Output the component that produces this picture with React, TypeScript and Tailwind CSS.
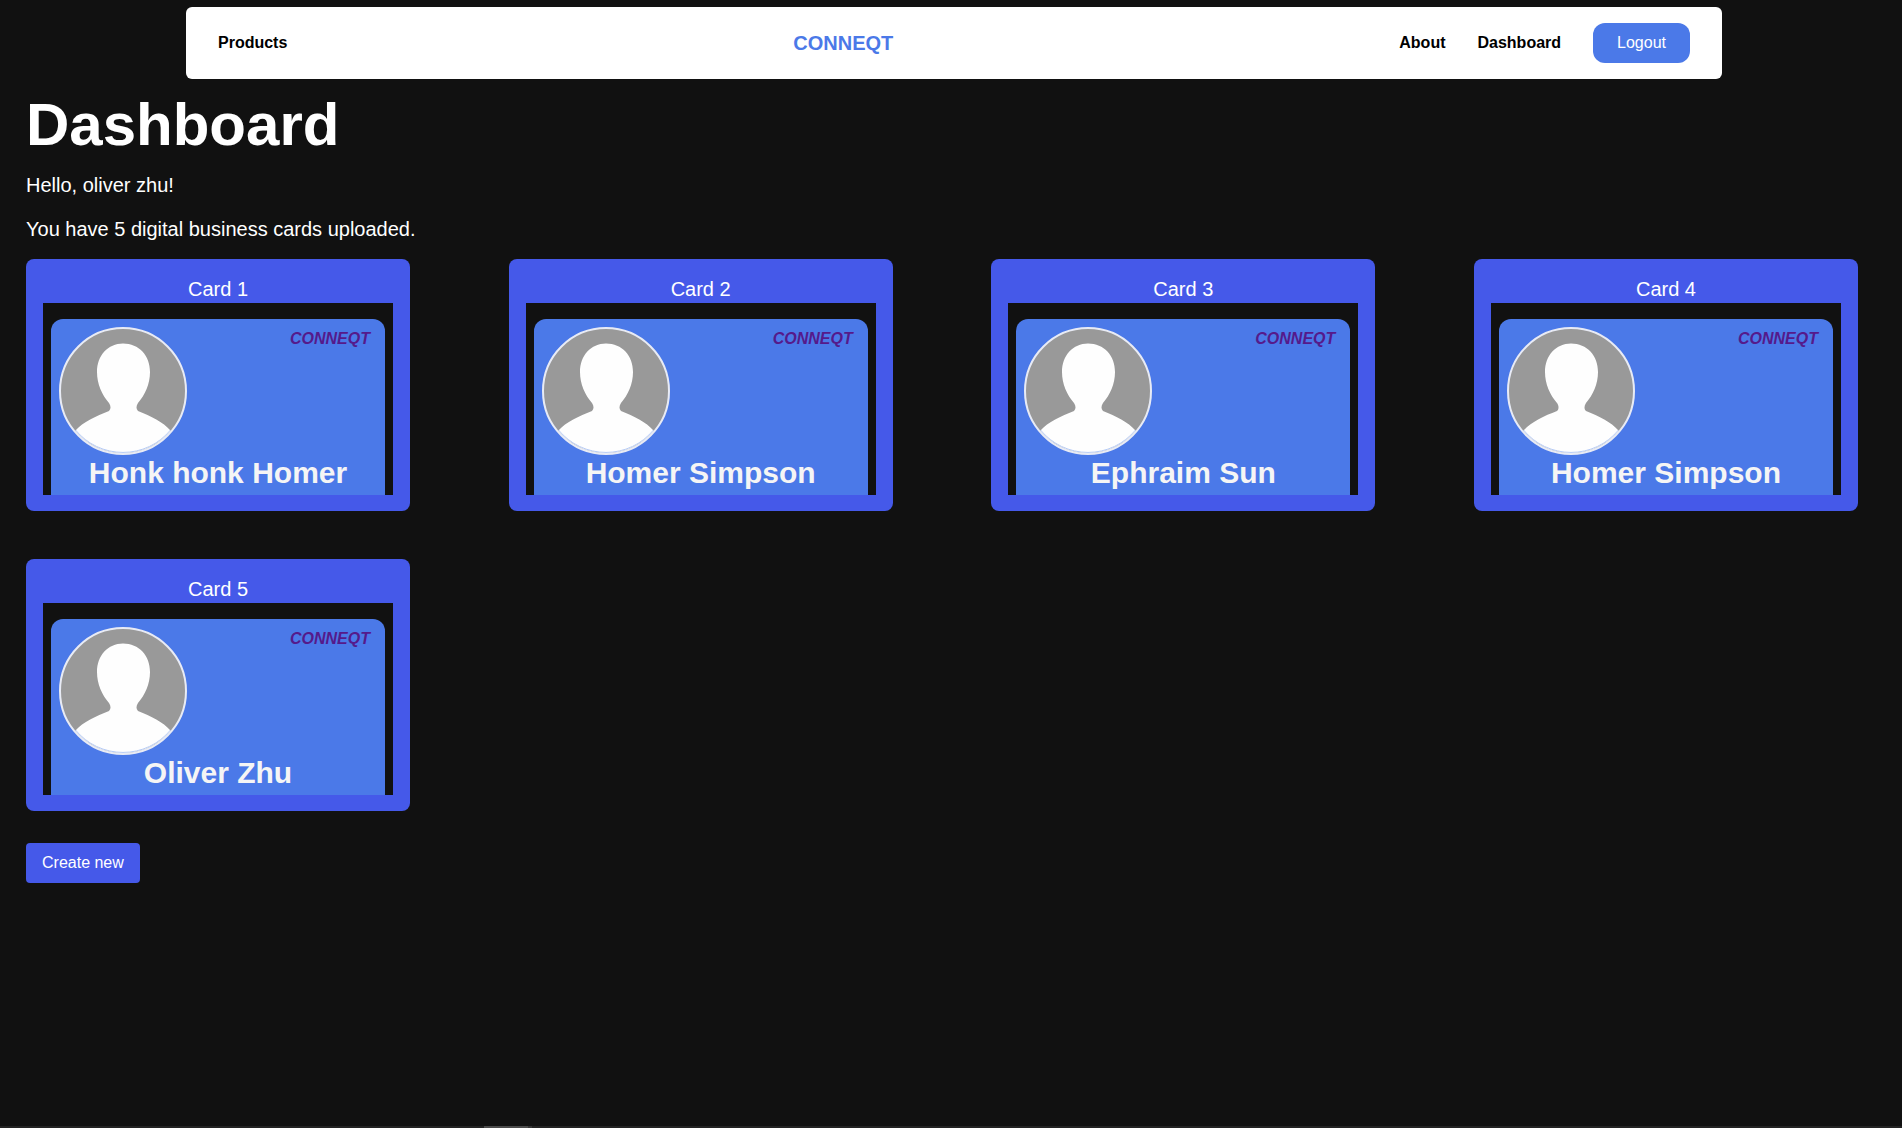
const cards = [
  { title: 'Card 1', name: 'Honk honk Homer' },
  { title: 'Card 2', name: 'Homer Simpson' },
  { title: 'Card 3', name: 'Ephraim Sun' },
  { title: 'Card 4', name: 'Homer Simpson' },
  { title: 'Card 5', name: 'Oliver Zhu' },
];

function Avatar() {
  return (
    <div className="size-32 overflow-hidden rounded-full border-2 border-[#e8ebf5] bg-[#999999]">
      <svg viewBox="0 0 124 124" className="block size-full" role="img" aria-label="Profile picture">
        <path
          fill="#fefefe"
          d="M62 14.500C78 14.500 89 26.500 89 43C89 55 84 66 77 74C75 77 75 80 77 82C90 87 102 93 109.500 101.500L112 124H12L14.500 101.500C22 93 35 87 48 82C50 80 50 77 48 74C41 66 36 55 36 43C36 26.500 47 14.500 62 14.500Z"
        />
        <path fill="none" stroke="#b5cbf7" strokeWidth="1" d="M14.500 101A61.500 61.500 0 0 0 109.500 101" />
      </svg>
    </div>
  );
}

function Card({ title, name }: { title: string; name: string }) {
  return (
    <article className="rounded-lg bg-[#4559e9] px-[17px] py-4">
      <h2 className="text-center text-xl">{title}</h2>
      <div className="h-48 overflow-hidden bg-[#111111] px-2 pt-4">
        <div className="h-60 rounded-xl bg-[#4b79e8] p-2">
          <div className="flex items-start justify-between">
            <Avatar />
            <a href="#" className="pr-[7px] font-bold text-[#551a8b] italic">
              CONNEQT
            </a>
          </div>
          <h3 className="text-center text-3xl font-bold text-[#f5f5f5]">{name}</h3>
        </div>
      </div>
    </article>
  );
}

export default function App() {
  return (
    <div className="flex min-h-screen flex-col bg-[#111111] pt-[7px] font-['Liberation_Sans',Arial,sans-serif] text-white">
      <header className="pr-[180px] pl-[186px]">
        <nav className="flex items-center justify-between rounded-md bg-white px-8 py-4 text-black">
          <a href="#" className="font-bold">
            Products
          </a>
          <a href="#" className="text-xl font-bold text-[#4b79e8]">
            CONNEQT
          </a>
          <div className="flex items-center gap-8">
            <a href="#" className="font-bold">
              About
            </a>
            <a href="#" className="font-bold">
              Dashboard
            </a>
            <button type="button" className="h-10 rounded-xl bg-[#4b79e8] px-6 text-white">
              Logout
            </button>
          </div>
        </nav>
      </header>
      <main className="flex grow flex-col items-start gap-4 pt-4 pr-[44px] pl-[26px]">
        <h1 className="text-6xl font-bold">Dashboard</h1>
        <p className="text-xl">Hello, oliver zhu!</p>
        <p className="text-xl">You have 5 digital business cards uploaded.</p>
        <section className="grid w-full grid-cols-[repeat(auto-fill,384px)] justify-between gap-y-12">
          {cards.map((card) => (
            <Card key={card.title} title={card.title} name={card.name} />
          ))}
        </section>
        <button type="button" className="mt-4 h-10 rounded bg-[#4559e9] px-4">
          Create new
        </button>
      </main>
      <footer className="flex h-0.5 bg-[#232323] pl-[484px]">
        <div className="w-11 bg-[#4b4b4b]" />
        <div className="w-1 bg-[#363636]" />
      </footer>
    </div>
  );
}
